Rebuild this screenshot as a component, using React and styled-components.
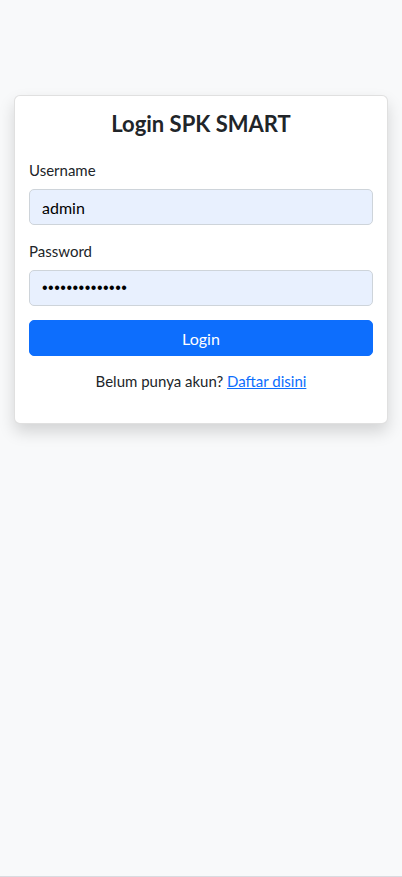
import styled, { createGlobalStyle } from 'styled-components';

const GlobalStyle = createGlobalStyle`
    * { box-sizing: border-box; }
    html, body {
        margin: 0;
        padding: 0;
        background-color: #f8f9fa;
    }
    body {
        font-family: Lato, "Noto Sans", "Liberation Sans", sans-serif;
        color: #212529;
    }
`

export default function App() {
    return (
        <>
            <GlobalStyle />
            <Page>
                <Card>
                    <Title>Login SPK SMART</Title>
                    <form onSubmit={(e) => e.preventDefault()}>
                        <Field>
                            <Label htmlFor='username'>Username</Label>
                            <Input id='username' type='text' defaultValue='admin' />
                        </Field>
                        <Field>
                            <Label htmlFor='password'>Password</Label>
                            <Input id='password' type='password' defaultValue='admin123456789' $secret />
                        </Field>
                        <SubmitButton type='submit'>Login</SubmitButton>
                    </form>
                    <Footer>
                        Belum punya akun? <a href='#'>Daftar disini</a>
                    </Footer>
                </Card>
            </Page>
        </>
    )
}

const Page = styled.main`
    height: 877px;
    padding: 95px 14px 0;
    border-bottom: 1px solid #d9dbe0;
`

const Card = styled.section`
    background-color: #ffffff;
    border: 1px solid rgba(0, 0, 0, 0.12);
    border-radius: 6px;
    box-shadow: 0 8px 16px rgba(0, 0, 0, 0.15);
    padding: 15px 14px 30px;
`

const Title = styled.h4`
    margin: 0 0 21px;
    text-align: center;
    font-size: 22px;
    font-weight: 700;
    line-height: 1.2;
    color: #212529;
`

const Field = styled.div`
    margin-bottom: 14px;
`

const Label = styled.label`
    display: block;
    font-size: 15px;
    line-height: 24px;
    margin-bottom: 7px;
`

const Input = styled.input`
    display: block;
    width: 100%;
    height: 36px;
    padding: 0 12px;
    font-family: ${(p) => (p.$secret ? '"Liberation Sans", sans-serif' : 'inherit')};
    font-size: 16px;
    letter-spacing: ${(p) => (p.$secret ? '0.5px' : 'normal')};
    color: #000000;
    background-color: #e8f0fe;
    border: 1px solid #ced4da;
    border-radius: 5px;
    outline: none;
`

const SubmitButton = styled.button`
    display: block;
    width: 100%;
    height: 36px;
    margin-top: 14px;
    font-family: inherit;
    font-size: 16px;
    color: #ffffff;
    background-color: #0d6efd;
    border: 1px solid #0d6efd;
    border-radius: 5px;
    cursor: pointer;
`

const Footer = styled.p`
    margin: 13px 0 0;
    text-align: center;
    font-size: 15px;
    line-height: 24px;

    a {
        color: #0d6efd;
        text-decoration: underline;
    }
`
